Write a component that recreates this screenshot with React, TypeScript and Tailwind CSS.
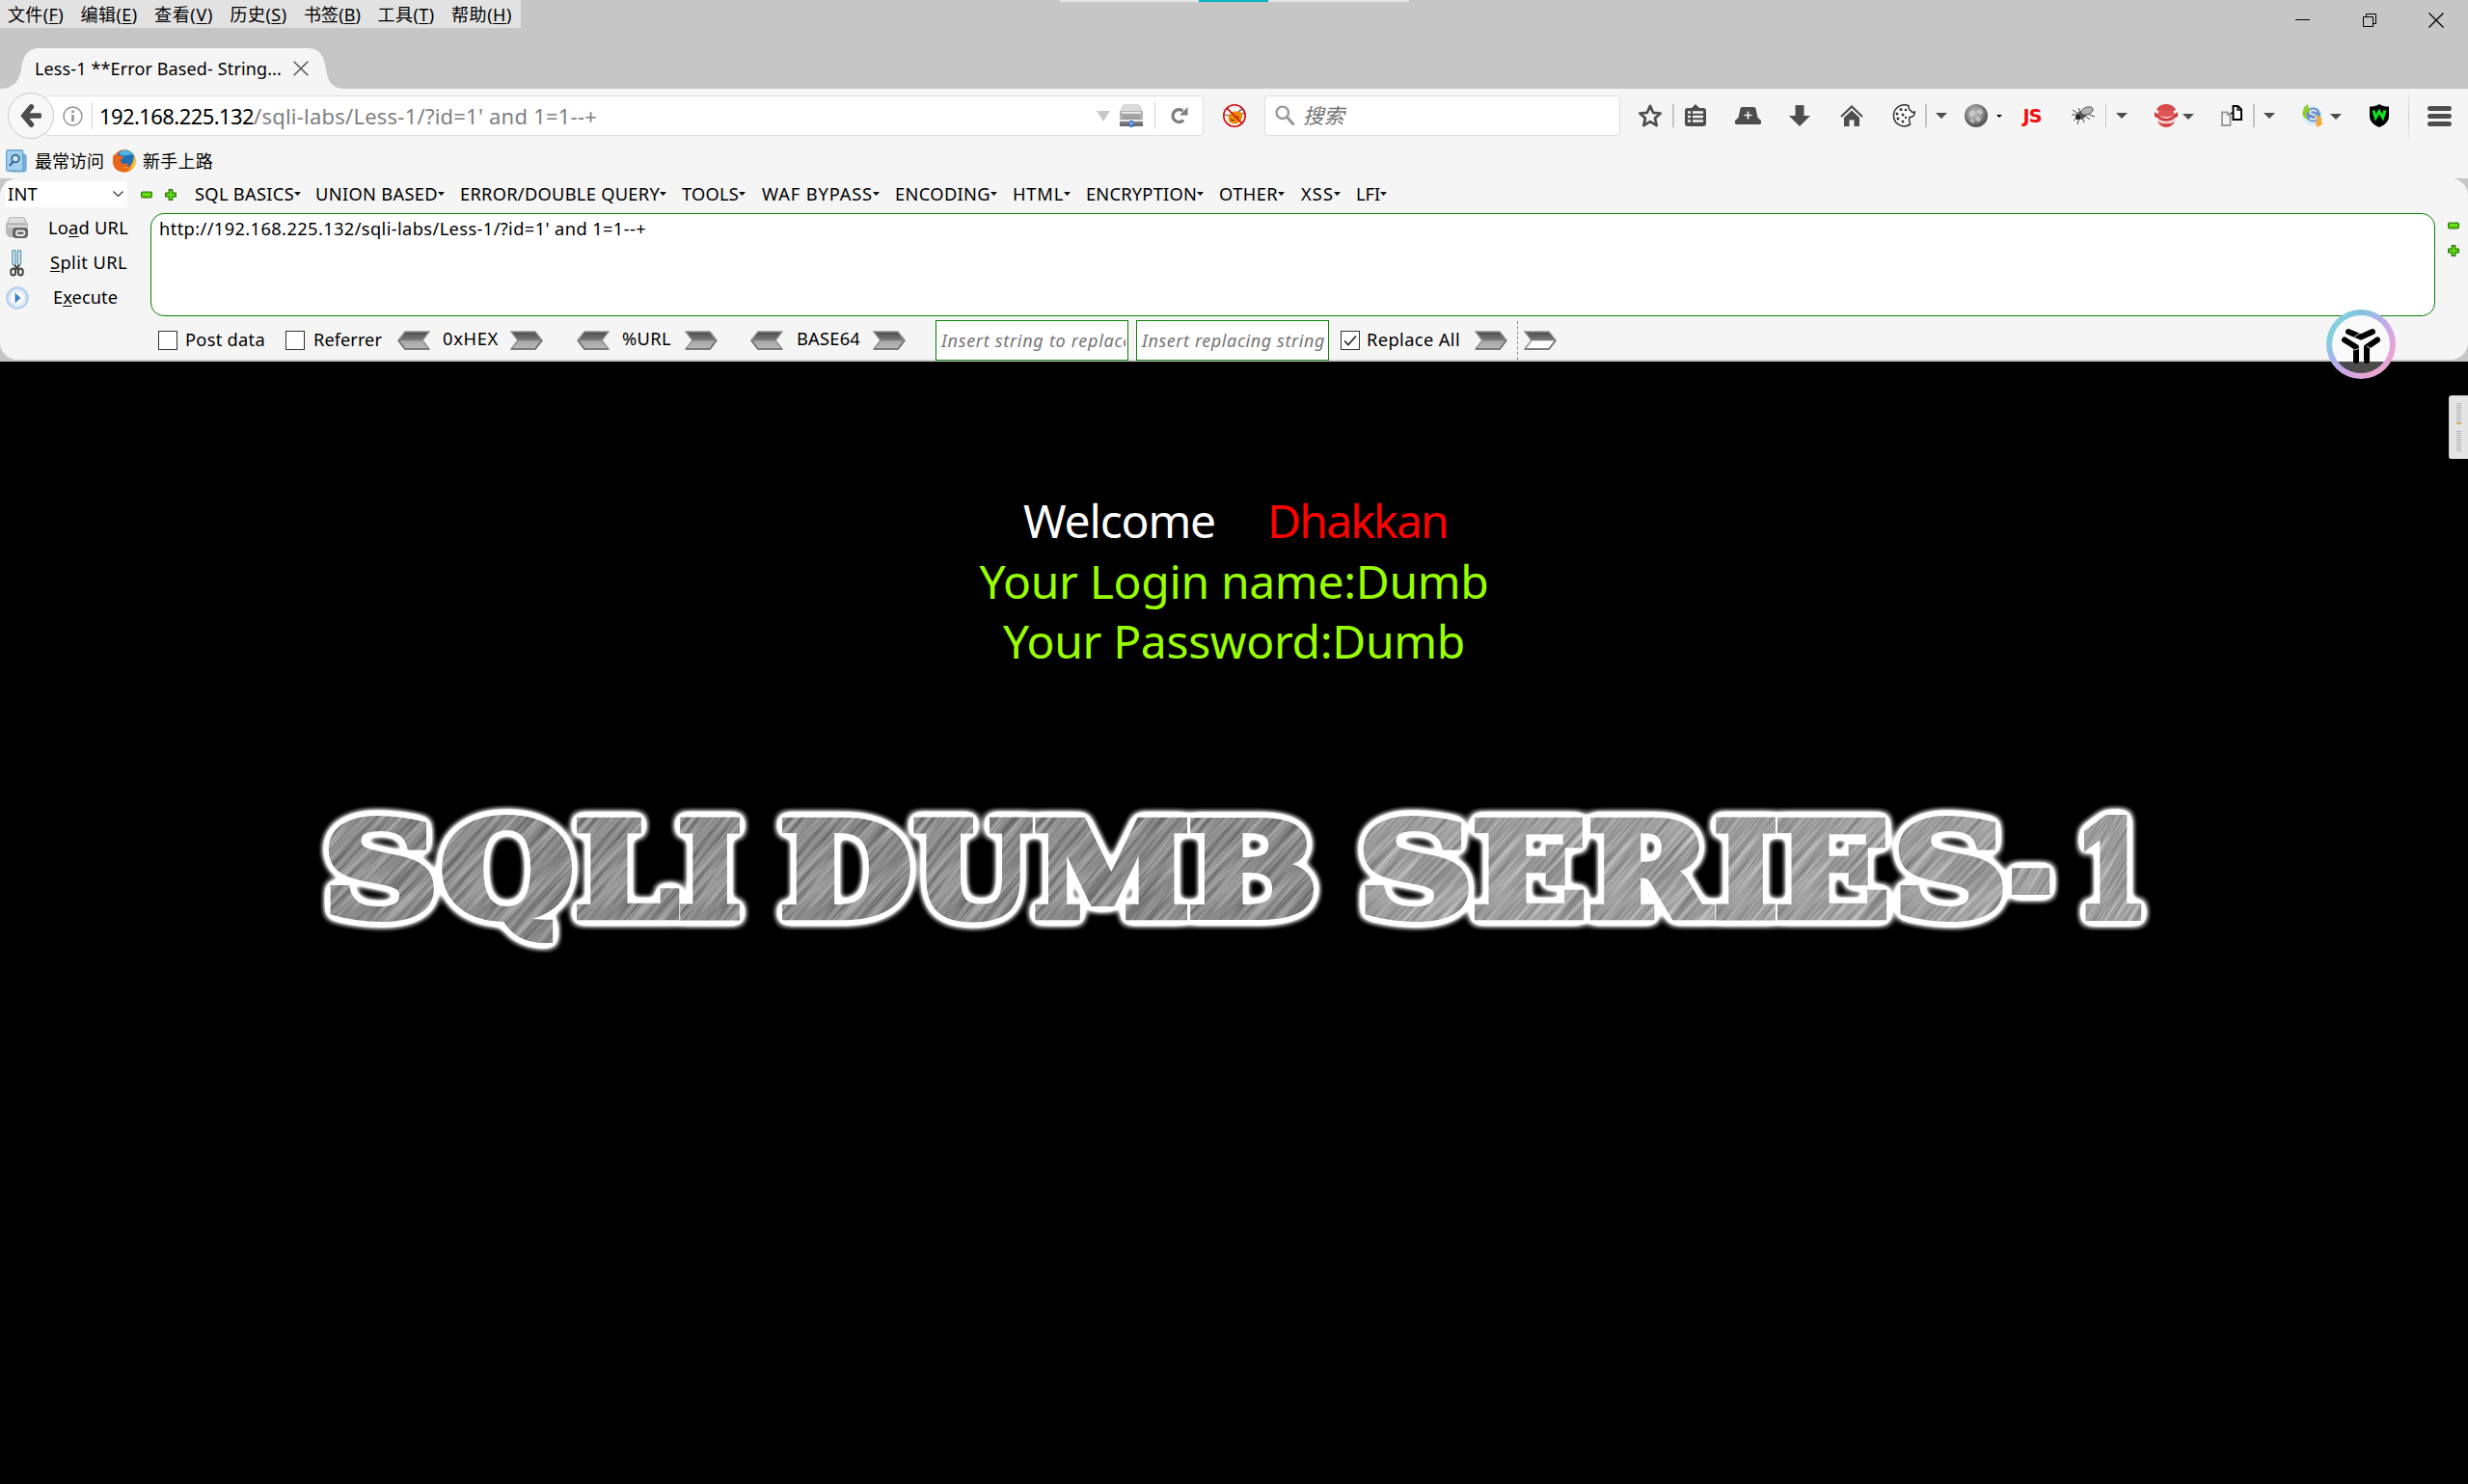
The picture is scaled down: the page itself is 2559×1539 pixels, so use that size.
import React, { useLayoutEffect, useRef, useState } from "react";

/** Text whose letter spacing is tuned so that it fills the given width. */
function T({ w, className = "", children }: { w: number; className?: string; children: React.ReactNode }) {
  const outer = useRef<HTMLSpanElement>(null);
  const [spacing, setSpacing] = useState(0);
  useLayoutEffect(() => {
    const el = outer.current;
    if (!el) return;
    const n = (el.textContent || "").length;
    setSpacing((w - el.getBoundingClientRect().width) / n);
  }, [w]);
  return (
    <span className={`block shrink-0 ${className}`} style={{ width: w }}>
      <span ref={outer} className="inline-block whitespace-pre" style={{ letterSpacing: spacing }}>
        {children}
      </span>
    </span>
  );
}

function Tri({ className = "", w = 12, h = 6, fill = "#4d4d4d" }: { className?: string; w?: number; h?: number; fill?: string }) {
  return (
    <svg className={`shrink-0 ${className}`} width={w} height={h} viewBox="0 0 12 6" preserveAspectRatio="none">
      <path d="M0 0h12L6 6z" fill={fill} />
    </svg>
  );
}

function Sep({ className = "" }: { className?: string }) {
  return <div className={`h-6 shrink-0 bg-[#c4c4c4] ${className}`} />;
}

function Minus({ className = "" }: { className?: string }) {
  return (
    <svg className={`shrink-0 ${className}`} width="12" height="12" viewBox="0 0 12 12">
      <rect x=".6" y="3.2" width="10.8" height="5.6" rx="1.2" fill="#55d400" stroke="#2f7a0c" strokeWidth="1.2" />
      <path d="M2 5.2h8" stroke="#8bea3a" />
    </svg>
  );
}

function Plus({ className = "" }: { className?: string }) {
  return (
    <svg className={`shrink-0 ${className}`} width="12" height="12" viewBox="0 0 12 12">
      <path d="M4.2.6h3.6v2.6l1 1h2.6v3.6H8.8l-1 1v2.6H4.2V8.8l-1-1H.6V4.2h2.6l1-1z" fill="#4fc808" stroke="#2f7a0c" strokeWidth="1.2" strokeLinejoin="round" />
      <path d="M2 6h8M6 2v8" stroke="#6fe01f" />
    </svg>
  );
}

function Arrow({ left = false, light = false, className = "" }: { left?: boolean; light?: boolean; className?: string }) {
  const fill = light ? "url(#arrowLight)" : "url(#arrowDark)";
  return (
    <svg className={`shrink-0 ${left ? "-scale-x-100" : ""} ${className}`} width="34" height="20" viewBox="0 0 34 20">
      <path d="M1 1h25l7 9-7 9H1l7-9z" fill={fill} stroke="#8c8c8c" strokeWidth="1.4" />
      <path d="M1 19h25l7-9" fill="none" stroke="#6d6d6d" strokeWidth="1.4" />
    </svg>
  );
}

function Box({ checked = false, className = "" }: { checked?: boolean; className?: string }) {
  return (
    <span className={`block h-5 w-5 shrink-0 border border-[#333] bg-white ${className}`}>
      {checked && (
        <svg width="18" height="18" viewBox="0 0 18 18">
          <path d="M3 9.5l4 4 8-9" fill="none" stroke="#222" strokeWidth="1.6" />
        </svg>
      )}
    </span>
  );
}

function Drive({ net = false }: { net?: boolean }) {
  return (
    <svg width="24" height="24" viewBox="0 0 24 24" className="shrink-0">
      {net ? (
        <>
          <path d="M4 .5h16l4 7.500V15a1.500 1.500 0 0 1-1.500 1.500h-21A1.500 1.500 0 0 1 0 15V8z" fill="#b0b0b0" />
          <path d="M4.500 1h15l3.500 6H1z" fill="#dcdcdc" />
          <path d="M2 8h20v1.500H2z" fill="#f3f3f3" />
          <path d="M3 12h18M3 14.500h18" stroke="#8c8c8c" strokeWidth="1.200" />
          <rect y="18" width="24" height="5" fill="#6b6b6b" />
          <path d="M0 19.500h24" stroke="#8e8e8e" />
          <rect x="9.500" y="17" width="5" height="7" rx="2" fill="#3f74d6" />
          <circle cx="12" cy="20" r="1.300" fill="#a9c6ff" />
        </>
      ) : (
        <>
          <path d="M4 1h15l4 8v9l-3 4H3l-3-4V9z" fill="#b9b9b9" />
          <path d="M5 2h13l2.500 5h-18z" fill="#dedede" />
          <path d="M2 10h20v1.500H2z" fill="#e6e6e6" />
          <rect x="7" y="12" width="16" height="11" rx="4" fill="#636363" />
          <rect x="11" y="15.500" width="8.500" height="4.500" rx="2.200" fill="none" stroke="#ededed" strokeWidth="1.800" />
        </>
      )}
    </svg>
  );
}

const menus: [string, string, number][] = [
  ["文件", "F", 58],
  ["编辑", "E", 59],
  ["查看", "V", 61],
  ["历史", "S", 59],
  ["书签", "B", 59],
  ["工具", "T", 59],
  ["帮助", "H", 63],
];

function TitleBar() {
  return (
    <header className="relative flex h-[92px] flex-col justify-between bg-[#c6c6c6]">
      <div className="flex items-start justify-between">
        <div className="flex h-[29px] w-[540px] items-center gap-[17.5px] bg-[#e2e2e2] pl-[8px] text-[18px]">
          {menus.map(([name, key, w]) => (
            <T key={key} w={w}>
              {name}(<u className="underline-offset-2">{key}</u>)
            </T>
          ))}
        </div>
        <div className="flex items-center pt-[12px] pr-[24px]">
          <svg width="16" height="18" viewBox="0 0 16 18"><path d="M0 8.500h15" stroke="#000" /></svg>
          <svg className="ml-[54px]" width="15" height="18" viewBox="0 0 15 18">
            <path d="M.5 5.500h10v10H.5zM3.500 5.500v-3h10v10h-3" fill="none" stroke="#000" />
          </svg>
          <svg className="ml-[52px]" width="18" height="18" viewBox="0 0 18 18">
            <path d="M1.500 1.500l15 15M16.500 1.500l-15 15" stroke="#000" strokeWidth="1.300" />
          </svg>
        </div>
      </div>
      <div className="relative flex h-[42px] w-[358px] items-center">
        <svg className="absolute inset-0" width="358" height="42" viewBox="0 0 358 42">
          <path d="M0 42c15 0 20-9 22-20C24 8 28 0 42 0h276c14 0 18 8 20 22 2 11 5 20 20 20z" fill="#f5f5f5" />
        </svg>
        <T w={256} className="relative ml-[36px] text-[18px]">Less-1 **Error Based- String...</T>
        <svg className="relative ml-[12px]" width="16" height="16" viewBox="0 0 16 16">
          <path d="M.7.7l14.600 14.600M15.300.7L.7 15.300" stroke="#555" strokeWidth="1.500" />
        </svg>
      </div>
      <div className="absolute top-0 left-[1099px] flex h-[2px] w-[362px] justify-center bg-[#e6e6e6]">
        <div className="ml-[-2px] w-[72px] bg-[#00b4c4]" />
      </div>
    </header>
  );
}

function NavBar() {
  return (
    <div className="flex h-[56px] items-center pl-[8px]">
      <div className="relative z-10 flex h-12 w-12 shrink-0 items-center justify-center rounded-full border border-[#c8c8c8] bg-[#f8f8f8]">
        <svg width="22" height="24" viewBox="0 0 22 24">
          <path d="M11.500 2.800L3.800 12l7.700 9.200M4 12h16" fill="none" stroke="#4c4c4c" strokeWidth="5.400" strokeLinecap="round" strokeLinejoin="miter" />
        </svg>
      </div>
      <div className="-ml-[10px] flex h-[42px] w-[1202px] shrink-0 items-center rounded-sm border border-[#dedede] bg-white">
        <svg className="ml-[18px]" width="21" height="21" viewBox="0 0 21 21">
          <circle cx="10.500" cy="10.500" r="9.500" fill="none" stroke="#929292" strokeWidth="1.400" />
          <path d="M10.500 9v7M10.500 4.500v2.500" stroke="#929292" strokeWidth="2.600" />
        </svg>
        <div className="ml-[9px] h-7 w-px bg-[#d4d4d4]" />
        <T w={160} className="ml-[7px] text-[22px]">192.168.225.132</T>
        <T w={356} className="text-[22px] text-[#808080]">/sqli-labs/Less-1/?id=1' and 1=1--+</T>
        <Tri w={14} h={11} fill="#c8c8c8" className="mr-[10px] ml-auto" />
        <Drive net />
        <div className="ml-[12px] h-7 w-px bg-[#d0d0d0]" />
        <svg className="mr-[15px] ml-[16px]" width="18" height="18" viewBox="0 0 18 18">
          <path d="M13.200 13.600A6.500 6.500 0 1 1 12.600 4" fill="none" stroke="#7d7d7d" strokeWidth="3.200" />
          <path d="M17.500 0v8.500H9z" fill="#7d7d7d" />
        </svg>
      </div>
      <svg className="ml-[20px] shrink-0" width="24" height="24" viewBox="0 0 24 24">
        <path d="M4 4l4 4M20 5l-4 3M2 11l5 1M22 9l-4 2" stroke="#555" strokeWidth="1.200" />
        <path d="M6 13c1-5 5-6 9-5.500 4 0 6 3 5 6-1 5-6 8-10 6.500-3-1-5-3-4-7z" fill="#f08a00" />
        <path d="M8 16l2 1 2-1M15 12l1 2" stroke="#333" fill="none" />
        <circle cx="12" cy="12" r="11.200" fill="none" stroke="#d00b0b" strokeWidth="1.600" />
        <path d="M4 4l16 16" stroke="#d00b0b" strokeWidth="1.600" />
      </svg>
      <div className="ml-[19px] flex h-[42px] w-[369px] shrink-0 items-center rounded-sm border border-[#dedede] bg-white">
        <svg className="ml-[10px]" width="21" height="22" viewBox="0 0 21 22">
          <circle cx="7.800" cy="7.800" r="6.200" fill="none" stroke="#999" strokeWidth="2.400" />
          <path d="M12.500 12.500l7 8" stroke="#999" strokeWidth="3.200" />
        </svg>
        <span className="ml-[8px] text-[21.500px] text-[#757575] italic">搜索</span>
      </div>
      <svg className="ml-[18px] shrink-0" width="26" height="26" viewBox="0 0 26 26">
        <path d="M13 2.800l3.100 7 7.600.7-5.700 5.100 1.700 7.500L13 19.200l-6.700 3.900L8 15.600 2.300 10.500l7.600-.7z" fill="none" stroke="#4d4d4d" strokeWidth="2.700" strokeLinejoin="round" />
      </svg>
      <Sep className="ml-[10px] w-[2px]" />
      <svg className="ml-[11px] shrink-0" width="22" height="24" viewBox="0 0 22 24">
        <path d="M3 4h4l4-4 4 4h4a3 3 0 0 1 3 3v13a3 3 0 0 1-3 3H3a3 3 0 0 1-3-3V7a3 3 0 0 1 3-3z" fill="#4d4d4d" />
        <path d="M3 8.500h3M8 8.500h11M3 13h3M8 13h11M3 17.500h3M8 17.500h11" stroke="#f5f5f5" strokeWidth="2.400" />
      </svg>
      <svg className="ml-[30px] shrink-0" width="27" height="18" viewBox="0 0 27 18">
        <path d="M7.500 0h12a2 2 0 0 1 2 1.600L23.500 11l3 2.500a2 2 0 0 1 .5 1.500v1.500a1.500 1.500 0 0 1-1.500 1.500h-24A1.500 1.500 0 0 1 0 16.500V15a2 2 0 0 1 .5-1.500l3-2.500 2-9.400a2 2 0 0 1 2-1.600z" fill="#4d4d4d" />
        <path d="M13.500 4.500v8M9.500 8.500h8" stroke="#f5f5f5" strokeWidth="1.700" />
      </svg>
      <svg className="ml-[29px] shrink-0" width="22" height="22" viewBox="0 0 22 22">
        <path d="M6.500 1q0-1 1-1h7q1 0 1 1v10H22L11 22 0 11h6.500z" fill="#4d4d4d" />
      </svg>
      <svg className="ml-[31px] shrink-0" width="24" height="22" viewBox="0 0 24 22">
        <path d="M1 12L12 1.500 23 12" fill="none" stroke="#4d4d4d" strokeWidth="2.200" />
        <path d="M4 13l8-7.500L20 13v9h-5.500v-6.500h-5V22H4z" fill="#4d4d4d" />
      </svg>
      <svg className="ml-[30px] shrink-0" width="24" height="24" viewBox="0 0 24 24">
        <path d="M17 1.800A11 11 0 1 0 18.500 21c-1-1 .5-2.500-1-4-.5-1.500 1-2.500.5-3.500 3 0 5-1.500 5.500-5.500-2 1-3.500.5-4-1-2-.5-2.500-2.500-2.500-5.200z" fill="#fff" stroke="#333" strokeWidth="1.500" />
        <g fill="#333"><circle cx="9" cy="5.500" r="1.500" /><circle cx="14" cy="6" r="1.300" /><circle cx="5" cy="10" r="1.500" /><circle cx="11" cy="11" r="1.500" /><circle cx="6" cy="15" r="1.500" /><circle cx="11" cy="18" r="1.500" /><circle cx="14" cy="14" r="1.200" /></g>
      </svg>
      <Sep className="ml-[10px] w-[2px]" />
      <Tri className="ml-[9px]" />
      <svg className="ml-[18px] shrink-0" width="24" height="24" viewBox="0 0 24 24">
        <circle cx="12" cy="12" r="12" fill="url(#ball)" />
        <path d="M5 8l4-2 2 3-2 4-4 1zM12 7l5-2 2 4-3 2zM11 14l4-1 2 3-3 3zM5 16l3-1 2 4-2 1z" fill="#d6d6d6" opacity=".7" />
      </svg>
      <Tri className="ml-[9px]" w={6} h={3} fill="#000" />
      <span className="ml-[19px] w-6 shrink-0 text-center font-['DejaVu_Sans'] text-[19px] leading-none font-bold tracking-[-1px] text-[#f20d0d]">JS</span>
      <svg className="ml-[29px] shrink-0" width="24" height="20" viewBox="0 0 24 20">
        <path d="M1 4l6 4M0 9h6M2 15l5-4M6 19l2-7M13 17l-2-6M19 14l-5-4M7 2l2 5M24 11l-8-3" stroke="#333" strokeWidth=".9" />
        <ellipse cx="10" cy="9.500" rx="6" ry="4" transform="rotate(-25 10 9.500)" fill="#555" />
        <ellipse cx="16" cy="5" rx="6.500" ry="3.800" transform="rotate(-20 16 5)" fill="#b5b5b5" stroke="#444" strokeWidth=".8" />
        <circle cx="6.500" cy="11.500" r="2.500" fill="#222" />
      </svg>
      <Sep className="ml-[11px] w-px" />
      <Tri className="ml-[10px]" />
      <svg className="ml-[28px] shrink-0" width="24" height="24" viewBox="0 0 24 24">
        <path d="M2 6C5-2 19-2 22 6l-2 1H4z" fill="#d94a4a" />
        <path d="M5 6.500h14l2 4c-4 4-14 4-18 0z" fill="#df5858" />
        <path d="M0 8l4 3c4 5 12 5 16 0l4-3v5l-3 1c-4 5-14 5-18 0l-3-1z" fill="#cf3a3a" />
        <path d="M3 18c5 3 13 3 18 0-4 8-14 8-18 0z" fill="#d64545" />
        <path d="M3 16c5 4 13 4 18 0" fill="none" stroke="#f3c4c4" strokeWidth="1.500" />
      </svg>
      <Tri className="mt-[2px] ml-[5px]" />
      <svg className="ml-[28px] shrink-0" width="22" height="22" viewBox="0 0 22 22">
        <path d="M1 7.500h5.500l3 3V21H1z" fill="none" stroke="#999" strokeWidth="1.800" />
        <path d="M6.500 7.500v3h3" fill="none" stroke="#999" strokeWidth="1.200" />
        <path d="M12.500 1h5l3.500 3.500V15h-8.500z" fill="#fff" stroke="#000" strokeWidth="2" />
        <path d="M17 1v4h4M9.500 8.500h3" fill="none" stroke="#000" strokeWidth="1.400" />
      </svg>
      <Sep className="ml-[11px] w-[2px]" />
      <Tri className="ml-[9px]" />
      <svg className="ml-[28px] shrink-0" width="22" height="24" viewBox="0 0 22 24">
        <circle cx="11" cy="12" r="10.500" fill="#d8eefa" />
        <circle cx="11.500" cy="11" r="7.500" fill="#6a90c8" />
        <path d="M15 8c-2-2.500-7-2-7 .5s7 2 7 5-5 3-7 1" fill="none" stroke="#dfeaf8" strokeWidth="1.800" />
        <path d="M6 0L1 4l1 1c-3 4-2 9 4 11-2-4-2-6-.5-8L8 9z" fill="#8fce2a" />
        <path d="M14 12c5-1 7 2 6 7l2 1-6 4-3-5 2-.5c1-2 1-4-1-6.500z" fill="#f3a83c" />
      </svg>
      <Tri className="mt-[2px] ml-[7px]" />
      <svg className="ml-[29px] shrink-0" width="20" height="24" viewBox="0 0 20 24">
        <path d="M10 0c3 2 6 2.500 10 2.500V12c0 6-4 9.500-10 12C4 21.500 0 18 0 12V2.500C4 2.500 7 2 10 0z" fill="#000" />
        <path d="M4 6.500l2.300 7.500L10 7.500l3.700 6.500L16 6.500" fill="none" stroke="#0be81b" strokeWidth="3" />
      </svg>
      <div className="ml-[20px] h-[56px] w-px bg-linear-to-b from-[#eee] via-[#ccc] to-[#eee]" />
      <div className="ml-[19px] flex w-[25px] flex-col gap-[3px]">
        <div className="h-[5px] rounded-full bg-[#4d4d4d]" />
        <div className="h-[5px] rounded-full bg-[#4d4d4d]" />
        <div className="h-[5px] rounded-full bg-[#4d4d4d]" />
      </div>
    </div>
  );
}

function Bookmarks() {
  return (
    <div className="flex h-[37px] items-center pt-[1px] pl-[6px] text-[18px]">
      <svg width="22" height="24" viewBox="0 0 22 24">
        <rect x="4" y="5" width="17" height="18" rx="2" fill="#7fb2da" stroke="#5e97c4" />
        <rect x=".7" y=".7" width="17" height="21.600" rx="1.500" fill="#a5d0ee" stroke="#6ca3cf" strokeWidth="1.400" />
        <circle cx="10" cy="9.500" r="3.800" fill="#cfe8f8" stroke="#3d749f" strokeWidth="2" />
        <path d="M7.500 12.500L4 17" stroke="#3d749f" strokeWidth="2.600" />
      </svg>
      <T w={72} className="ml-[8px]">最常访问</T>
      <svg className="ml-[9px]" width="24" height="24" viewBox="0 0 24 24">
        <circle cx="12" cy="12" r="11.800" fill="url(#fox)" />
        <path d="M5 5C8-1 19-1 22 7c1 6-1 9-5 11-5 0-9-3-10-7z" fill="#1f6fb5" />
        <path d="M6 4c3-4 11-5 15 2-4-2-5 1-8 0-2 1-5 0-7-2z" fill="#4fb4e6" />
        <path d="M1 5c1 1 2 2 4 1.500 3-.5 5 .5 6 2l-3 2.500c0 4 5 5 8 3 0 4-5 6-9 4 6 4 12 0 13-6 2 7-2 11.500-8 11.500S0 20 0 13C0 9 0 8 1 5z" fill="#e9641d" />
        <path d="M21.500 7c2 5 1 10-3 13-3 2-6 2.500-8 2.500 7 0 11-7 11-15.500z" fill="#fdc22d" />
      </svg>
      <T w={73} className="ml-[7px]">新手上路</T>
    </div>
  );
}

const tools: [string, number, string][] = [
  ["SQL BASICS", 103, "ml-[19px]"],
  ["UNION BASED", 127, "ml-[15px]"],
  ["ERROR/DOUBLE QUERY", 207, "ml-[16px]"],
  ["TOOLS", 59, "ml-[16px]"],
  ["WAF BYPASS", 115, "ml-[17px]"],
  ["ENCODING", 99, "ml-[16px]"],
  ["HTML", 53, "ml-[16px]"],
  ["ENCRYPTION", 115, "ml-[16px]"],
  ["OTHER", 61, "ml-[16px]"],
  ["XSS", 34, "ml-[17px]"],
  ["LFI", 25, "ml-[16px]"],
];

function HackBar() {
  return (
    <section className="h-[190px] bg-[#c6c6c6] pb-[2px] text-[18.300px]">
      <div className="h-[188px] rounded-[18px] bg-[#f5f5f5]">
        <div className="flex h-[33px] items-center">
          <div className="ml-[6px] flex h-[27px] w-[126px] shrink-0 items-center justify-between bg-white pr-[4px] pl-[2px]">
            <T w={31}>INT</T>
            <svg width="11" height="7" viewBox="0 0 11 7"><path d="M.5.5l5 5 5-5" fill="none" stroke="#333" strokeWidth="1.200" /></svg>
          </div>
          <Minus className="ml-[14px]" />
          <Plus className="ml-[13px]" />
          {tools.map(([name, w, gap]) => (
            <div key={name} className={`flex items-center ${gap}`}>
              <T w={w} className="pb-[1px]">{name}</T>
              <Tri w={7} h={4} fill="#111" />
            </div>
          ))}
        </div>
        <div className="flex h-[109px]">
          <div className="flex w-[156px] shrink-0 flex-col">
            <div className="flex h-[36.500px] items-center pl-[6px]">
              <Drive />
              <T w={83} className="ml-[20px] pb-[1px]">Lo<u className="underline-offset-2">a</u>d URL</T>
            </div>
            <div className="flex h-[36.500px] items-center pl-[10px]">
              <svg width="15" height="28" viewBox="0 0 15 28">
                <path d="M4.500 2v12M10 2v12" stroke="#5f95ad" strokeWidth="4.500" strokeLinecap="round" />
                <path d="M4.500 2v12M10 2v12" stroke="#cfe3ec" strokeWidth="2.200" strokeLinecap="round" />
                <path d="M5 16l4.500 5M10 16l-4.500 5" stroke="#444" strokeWidth="2.200" />
                <ellipse cx="3.700" cy="23" rx="2.500" ry="3.600" fill="none" stroke="#444" strokeWidth="2" />
                <ellipse cx="11.300" cy="23" rx="2.500" ry="3.600" fill="none" stroke="#444" strokeWidth="2" />
              </svg>
              <T w={80} className="ml-[27px] pb-[1px]"><u className="underline-offset-2">S</u>plit URL</T>
            </div>
            <div className="flex h-[36px] items-center pl-[6px]">
              <svg width="24" height="24" viewBox="0 0 24 24">
                <circle cx="12" cy="12" r="10.500" fill="#f3f8ff" stroke="#b7cff0" strokeWidth="2.600" />
                <circle cx="12" cy="12" r="7.500" fill="#fff" stroke="#c9d7ea" />
                <path d="M9.500 6.500l6 5.500-6 5.500z" fill="#3f7fd0" />
              </svg>
              <T w={67} className="ml-[25px] pb-[1px]">E<u className="underline-offset-2">x</u>ecute</T>
            </div>
          </div>
          <div className="mt-[3px] h-[107px] w-[2369px] shrink-0 rounded-[14px] border border-[#0b800b] bg-white px-[8px] pt-[2px]">
            <T w={505} className="leading-[26px]">http://192.168.225.132/sqli-labs/Less-1/?id=1' and 1=1--+</T>
          </div>
          <div className="ml-[13px] flex flex-col gap-[14px] pt-[10px]">
            <Minus />
            <Plus />
          </div>
        </div>
        <div className="flex h-[46px] items-center pt-[5px]">
          <Box className="ml-[164px]" />
          <T w={83} className="ml-[8px]">Post data</T>
          <Box className="ml-[21px]" />
          <T w={71} className="ml-[9px]">Referrer</T>
          <Arrow left className="ml-[16px]" />
          <T w={58} className="ml-[13px] pb-[2px]">0xHEX</T>
          <Arrow className="ml-[12px]" />
          <Arrow left className="ml-[35px]" />
          <T w={51} className="ml-[13px] pb-[2px]">%URL</T>
          <Arrow className="ml-[14px]" />
          <Arrow left className="ml-[34px]" />
          <T w={66} className="ml-[14px] pb-[2px]">BASE64</T>
          <Arrow className="ml-[13px]" />
          <div className="ml-[31px] flex h-[42px] w-[200px] shrink-0 items-center overflow-hidden border border-[#0b800b] bg-white pr-[2px] pl-[5px] text-[18px] text-[#757575] italic">
            <div className="overflow-hidden leading-[26px]">
              <T w={198}>Insert string to replace</T>
            </div>
          </div>
          <div className="ml-[8px] flex h-[42px] w-[200px] shrink-0 items-center overflow-hidden border border-[#0b800b] bg-white pl-[5px] text-[18px] text-[#757575] italic">
            <T w={190}>Insert replacing string</T>
          </div>
          <Box checked className="ml-[12px]" />
          <T w={97} className="ml-[7px]">Replace All</T>
          <Arrow className="ml-[15px]" />
          <div className="ml-[10px] h-[40px] border-l border-dashed border-[#888]" />
          <Arrow light className="ml-[6px]" />
        </div>
      </div>
    </section>
  );
}

/* Each letter: glyph, left and right edge of its ink. */
const letters: [string, number, number][] = [
  ["S", 340, 450], ["Q", 458, 593], ["L", 598, 704], ["I", 705, 767],
  ["D", 811, 944], ["U", 947, 1071], ["M", 1073, 1232], ["B", 1234, 1362],
  ["S", 1413, 1523], ["E", 1529, 1642], ["R", 1649, 1778], ["I", 1779, 1841], ["E", 1843, 1956],
  ["S", 1968, 2077], ["-", 2085, 2126], ["1", 2160, 2221],
];

const LOGO_SIZE = 135;
const LOGO_STROKE = 9;

function Letters() {
  const [ctx] = useState(() => document.createElement("canvas").getContext("2d")!);
  ctx.font = `bold ${LOGO_SIZE}px "DejaVu Serif"`;
  return (
    <>
      {letters.map(([ch, a, b], i) => {
        const m = ctx.measureText(ch);
        const s = (b - a - LOGO_STROKE) / (m.actualBoundingBoxRight + m.actualBoundingBoxLeft);
        const x = a + LOGO_STROKE / 2 + m.actualBoundingBoxLeft * s;
        const metal = i < 8 ? "url(#metalDark)" : "url(#metalLight)";
        return (
          <text key={i} transform={`translate(${x} 949.5) scale(${s} 1)`} vectorEffect="non-scaling-stroke" fill={metal} stroke={metal}>
            {ch}
          </text>
        );
      })}
    </>
  );
}

function Logo() {
  return (
    <svg className="mt-[123px] shrink-0 font-['DejaVu_Serif'] text-[135px] leading-none font-bold" width="1920" height="190" viewBox="320 820 1920 190">
      <defs>
        <filter id="halo" filterUnits="userSpaceOnUse" x="320" y="820" width="1920" height="190" colorInterpolationFilters="sRGB">
          <feGaussianBlur in="SourceAlpha" stdDeviation="5.500" />
          <feColorMatrix values="0 0 0 0 1  0 0 0 0 1  0 0 0 0 1  0 0 0 7 -0.08" result="outline" />
          <feMerge>
            <feMergeNode in="outline" />
            <feMergeNode in="SourceGraphic" />
          </feMerge>
        </filter>
        <filter id="brushDark" x="0" y="0" width="100%" height="100%" colorInterpolationFilters="sRGB">
          <feTurbulence type="fractalNoise" baseFrequency="0.012 0.25" numOctaves="3" seed="7" />
          <feColorMatrix values="0.5 0 0 0 0.29  0.5 0 0 0 0.29  0.5 0 0 0 0.29  0 0 0 0 1" />
        </filter>
        <filter id="brushLight" x="0" y="0" width="100%" height="100%" colorInterpolationFilters="sRGB">
          <feTurbulence type="fractalNoise" baseFrequency="0.012 0.25" numOctaves="3" seed="4" />
          <feColorMatrix values="0.5 0 0 0 0.36  0.5 0 0 0 0.36  0.5 0 0 0 0.36  0 0 0 0 1" />
        </filter>
        <pattern id="metalDark" patternUnits="userSpaceOnUse" x="-400" y="-400" width="800" height="800" patternTransform="rotate(-52)">
          <rect width="800" height="800" fill="#8a8a8a" filter="url(#brushDark)" />
        </pattern>
        <pattern id="metalLight" patternUnits="userSpaceOnUse" x="-400" y="-400" width="800" height="800" patternTransform="rotate(-52)">
          <rect width="800" height="800" fill="#a0a0a0" filter="url(#brushLight)" />
        </pattern>
      </defs>
      <g strokeWidth={LOGO_STROKE} filter="url(#halo)"><Letters /></g>
    </svg>
  );
}

function Badge() {
  return (
    <div className="absolute top-[321px] left-[2412px] h-[72px] w-[72px] rounded-full bg-[conic-gradient(#7fc4dd,#b9aee8_12%,#e6a3d8_25%,#e9a5d0_45%,#cfa6e4_58%,#a9b4ee_67%,#83cfdf_78%,#8bcfdc_88%,#7fc4dd)] p-[6px]">
      <div className="flex h-full w-full justify-center rounded-full bg-linear-to-b from-[#fafafa] from-[48px] to-[#4b4b4b] to-[48px]">
        <svg className="mt-[13px]" width="42" height="38" viewBox="0 0 42 38">
          <g fill="none" stroke="#000" strokeWidth="6" strokeLinecap="round" strokeLinejoin="round">
            <path d="M8 4l13 5.500L33 4" />
            <path d="M4 12.500l12 7.500v14M38 12.500L27 20v14" />
          </g>
          <path d="M14 9.500l6-4M12 23.500l7-2M27 19l5 3" stroke="#fafafa" strokeWidth=".8" />
        </svg>
      </div>
    </div>
  );
}

function SideHandle() {
  return (
    <div className="absolute top-[410px] right-0 flex h-[66px] w-5 flex-col items-center justify-center gap-[7px] rounded-l-[3px] border border-r-0 border-[#cfcfcf] bg-[#e4e4e4]">
      <div className="h-[22px] w-[5px] border-b border-[#ff9f1a] bg-[repeating-linear-gradient(#b4b4b4_0_1px,transparent_1px_2px)]" />
      <div className="h-[21px] w-[5px] bg-[repeating-linear-gradient(#b4b4b4_0_1px,transparent_1px_2px)]" />
    </div>
  );
}

export default function App() {
  return (
    <div className="relative flex h-[1539px] w-[2559px] flex-col overflow-hidden bg-[#f5f5f5] font-['Noto_Sans','Noto_Sans_CJK_SC',sans-serif] leading-none text-black">
      <svg className="absolute" width="0" height="0">
        <defs>
          <linearGradient id="arrowDark" x1="0" y1="0" x2="0" y2="1"><stop offset="0" stopColor="#4a4a4a" /><stop offset=".48" stopColor="#7a7a7a" /><stop offset=".55" stopColor="#a8a8a8" /><stop offset="1" stopColor="#b8b8b8" /></linearGradient>
          <linearGradient id="arrowLight" x1="0" y1="0" x2="0" y2="1"><stop offset="0" stopColor="#4a4a4a" /><stop offset=".48" stopColor="#7a7a7a" /><stop offset=".55" stopColor="#fff" /><stop offset="1" stopColor="#fff" /></linearGradient>
          <radialGradient id="ball" cx=".45" cy=".4"><stop offset="0" stopColor="#bdbdbd" /><stop offset=".65" stopColor="#929292" /><stop offset="1" stopColor="#5a5a5a" /></radialGradient>
          <linearGradient id="fox" x1="0" y1="0" x2="1" y2="1"><stop offset="0" stopColor="#e2501c" /><stop offset="1" stopColor="#ffcb2e" /></linearGradient>
        </defs>
      </svg>
      <TitleBar />
      <NavBar />
      <Bookmarks />
      <HackBar />
      <main className="flex h-[1164px] flex-col items-center bg-black pt-[134px] text-[48px] leading-[62.500px] text-[#9f0]">
        <div className="flex gap-[54px] pl-[3px]">
          <T w={199} className="text-white">Welcome</T>
          <T w={187} className="text-[#f00]">Dhakkan</T>
        </div>
        <T w={528}>Your Login name:Dumb</T>
        <T w={479}>Your Password:Dumb</T>
        <Logo />
      </main>
      <Badge />
      <SideHandle />
    </div>
  );
}
